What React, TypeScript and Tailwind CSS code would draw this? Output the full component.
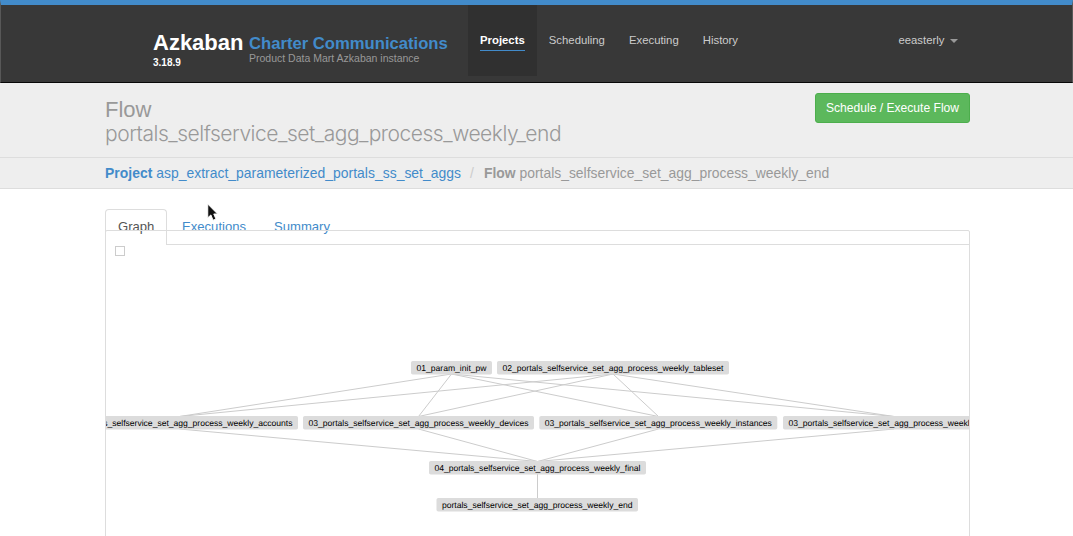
import React from "react";

type FlowNode = { label: string; x: number; y: number; w: number };
type Edge = [number, number, number, number];

const nodes: FlowNode[] = [
  { label: "01_param_init_pw", x: 411, y: 361, w: 81 },
  { label: "02_portals_selfservice_set_agg_process_weekly_tableset", x: 497, y: 361, w: 232 },
  { label: "03_portals_selfservice_set_agg_process_weekly_accounts", x: 62, y: 416, w: 236 },
  { label: "03_portals_selfservice_set_agg_process_weekly_devices", x: 303, y: 416, w: 231 },
  { label: "03_portals_selfservice_set_agg_process_weekly_instances", x: 539.3, y: 416, w: 238 },
  { label: "03_portals_selfservice_set_agg_process_weekly_users", x: 783, y: 416, w: 222 },
  { label: "04_portals_selfservice_set_agg_process_weekly_final", x: 429, y: 461, w: 217 },
  { label: "portals_selfservice_set_agg_process_weekly_end", x: 436.5, y: 498, w: 201.5 },
];

const edges: Edge[] = [
  [451.5, 374, 179.5, 416.5],
  [451.5, 374, 418.5, 416.5],
  [451.5, 374, 658.5, 416.5],
  [451.5, 374, 894, 416.5],
  [613, 374, 179.5, 416.5],
  [613, 374, 418.5, 416.5],
  [613, 374, 658.5, 416.5],
  [613, 374, 894, 416.5],
  [179.5, 429, 537.5, 461.5],
  [418.5, 429, 537.5, 461.5],
  [658.5, 429, 537.5, 461.5],
  [894, 429, 537.5, 461.5],
  [537.5, 474, 537.5, 498],
];

function FlowGraph() {
  return (
    <svg className="block h-[304px] w-[863px]" viewBox="106 232 863 304">
      <g stroke="#cccccc" strokeWidth="1">
        {edges.map(([x1, y1, x2, y2], i) => (
          <line key={i} x1={x1} y1={y1} x2={x2} y2={y2} />
        ))}
      </g>
      {nodes.map((n) => (
        <g key={n.label}>
          <rect x={n.x} y={n.y} width={n.w} height="13.5" rx="1.8" fill="#dcdcdc" />
          <text
            x={n.x + 5.5}
            y={n.y + 10}
            textLength={n.w - 11}
            fontSize="8.6"
            fill="#000000"
            textRendering="geometricPrecision"
          >
            {n.label}
          </text>
        </g>
      ))}
      <rect x="115.5" y="246.5" width="9" height="9" fill="#ffffff" stroke="#cccccc" />
    </svg>
  );
}

function Header() {
  return (
    <header className="h-[83px] border-x border-t-[5px] border-b border-x-[#585858] border-t-[#428bca] border-b-[#080808] bg-[#383838]">
      <div className="flex pl-[152px]">
        <div className="w-[96px] pt-[26px]">
          <div className="text-[22px] leading-6 font-bold text-white">Azkaban</div>
          <div className="mt-[2px] text-[10px] leading-3 font-bold text-white">3.18.9</div>
        </div>
        <div className="w-[219px] pt-[29px] whitespace-nowrap">
          <div className="text-[16.65px] leading-[19px] font-bold text-[#428bca]">Charter Communications</div>
          <div className="-mt-px text-[10.5px] leading-3 text-[#999999]">Product Data Mart Azkaban instance</div>
        </div>
        <nav className="flex h-[71px] text-[11.35px] leading-[14px] text-[#cccccc]">
          <a className="bg-[#303030] px-3 pt-7 font-bold text-white">
            <span className="block h-[18px] border-b border-[#428bca]">Projects</span>
          </a>
          <a className="px-3 pt-7">Scheduling</a>
          <a className="px-3 pt-7">Executing</a>
          <a className="px-3 pt-7">History</a>
        </nav>
        <div className="ml-auto flex w-[173.5px] gap-[6px] pt-7 text-[11.3px] leading-[14px] text-[#cccccc]">
          <span>eeasterly</span>
          <svg className="mt-[6px] h-1 w-2" viewBox="0 0 8 4">
            <path d="M0 0h8L4 4z" fill="#999999" />
          </svg>
        </div>
      </div>
    </header>
  );
}

function TitleBar() {
  return (
    <section className="flex h-[75px] justify-between border-b border-[#dddddd] bg-[#eeeeee] pr-[103px] pl-[105px] text-[#999999]">
      <h1 className="pt-[15px] text-[22px] leading-6">
        <span className="block">Flow</span>
        <span className="block font-['Inter'] text-[21px] font-light tracking-[-0.48px]">
          portals_selfservice_set_agg_process_weekly_end
        </span>
      </h1>
      <button className="mt-[10px] h-[30px] w-[155px] rounded-[3px] border border-[#4cae4c] bg-[#5cb85c] text-[12.1px] whitespace-nowrap text-white">
        Schedule / Execute Flow
      </button>
    </section>
  );
}

function Breadcrumbs() {
  return (
    <div className="flex h-[31px] border-b border-[#dddddd] bg-[#eeeeee] pl-[105px] text-[13.9px] leading-[30px] whitespace-nowrap text-[#999999]">
      <a className="w-[365px] tracking-[0.03px] text-[#428bca]">
        <b>Project</b> asp_extract_parameterized_portals_ss_set_aggs
      </a>
      <span className="w-[14px] text-[#cccccc]">/</span>
      <span>
        <b>Flow</b> portals_selfservice_set_agg_process_weekly_end
      </span>
    </div>
  );
}

export default function App() {
  return (
    <div className="relative h-[536px] w-[1073px] overflow-hidden bg-white font-['Liberation_Sans',Arial,sans-serif]">
      <Header />
      <TitleBar />
      <Breadcrumbs />
      <main className="pt-5 pr-[103px] pl-[105px]">
        <div className="flex h-9 text-[13.1px] leading-[33px]">
          <div className="w-[62px] rounded-t border border-b-0 border-[#dddddd] pl-3 text-[#555555]">Graph</div>
          <div className="flex flex-1 border-b border-[#dddddd] pt-px text-[#428bca]">
            <span className="w-[92px] pl-[15px]">Executions</span>
            <span className="pl-[15px]">Summary</span>
          </div>
        </div>
        <div className="relative -mt-[15px] h-[320px] w-[865px] rounded-[2px] border border-[#dddddd] pt-px">
          <FlowGraph />
        </div>
      </main>
      <svg className="absolute top-[203px] left-[206px] h-[19px] w-[13px]" viewBox="0 0 12 18">
        <path
          d="M1.5 1v13l3-2.7 2 5 2.8-1.1-2.1-4.8h3.6z"
          fill="#111111"
          stroke="#ffffff"
          strokeWidth="0.9"
        />
      </svg>
    </div>
  );
}
